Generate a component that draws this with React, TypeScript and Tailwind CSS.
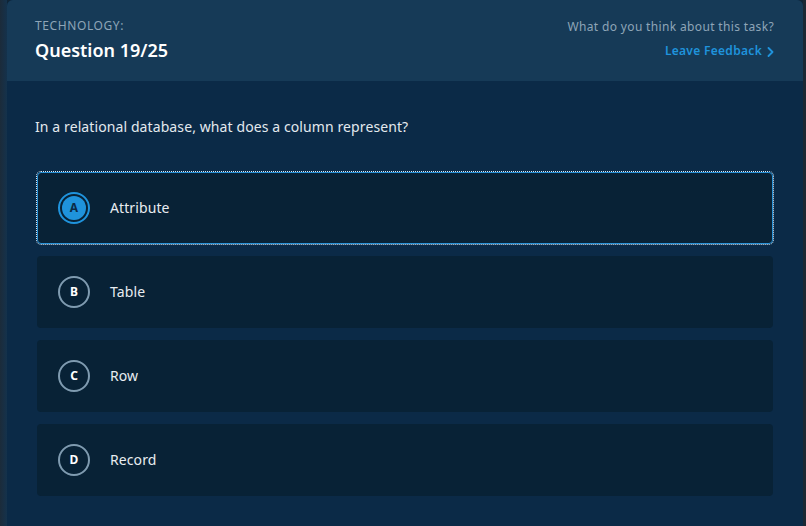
const OPTIONS = [
  { key: "A", label: "Attribute" },
  { key: "B", label: "Table" },
  { key: "C", label: "Row" },
  { key: "D", label: "Record" },
];

export default function App() {
  const selected = "A";

  return (
    <div
      className="flex h-[526px] w-[806px] bg-[#0f2436]"
      style={{ fontFamily: '"Noto Sans", "Open Sans", sans-serif' }}
    >
      <div className="w-[7px] bg-gradient-to-r from-[#1b2b3a] to-[#14324c]" />
      <div className="flex flex-1 flex-col overflow-hidden rounded-t-[6px] bg-[#0b2a47]">
        <div className="flex h-[81px] shrink-0 items-start justify-between bg-[#163a57] pl-[28px] pr-[29px] pt-[18px]">
          <div>
            <div className="text-[12px] leading-[16px] tracking-[0.05em] text-[#8ea5b7]">
              TECHNOLOGY:
            </div>
            <div className="mt-[4px] text-[18px] font-semibold leading-[24px] text-white">
              Question 19/25
            </div>
          </div>
          <div className="flex flex-col items-end pt-[1px]">
            <div className="text-[12px] leading-[16px] tracking-[0.35px] text-[#8ea5b7]">
              What do you think about this task?
            </div>
            <button className="mt-[8px] flex items-center gap-[5px] text-[12px] font-semibold leading-[16px] tracking-[0.3px] text-[#1f93dc]">
              Leave Feedback
              <svg width="7" height="10" viewBox="0 0 7 10" fill="none" className="mt-[1px]">
                <polyline
                  points="1.5,1 5.5,5 1.5,9"
                  stroke="currentColor"
                  strokeWidth="1.8"
                  strokeLinecap="round"
                  strokeLinejoin="round"
                />
              </svg>
            </button>
          </div>
        </div>

        <div className="flex flex-col px-[30px] pt-[36px]">
          <p className="-ml-[2px] text-[14px] leading-[20px] tracking-[0.1px] text-[#e3e9ee]">
            In a relational database, what does a column represent?
          </p>

          <div className="mt-[35px] flex flex-col gap-[12px]">
            {OPTIONS.map((o) => {
              const active = o.key === selected;
              return (
                <button
                  key={o.key}
                  className={`flex h-[72px] items-center rounded-[4px] bg-[#082236] pl-[20px] text-left ${
                    active
                      ? "border border-[#2a93d8] outline outline-1 outline-dotted outline-[#dbe8f2]"
                      : "border border-transparent"
                  }`}
                >
                  {active ? (
                    <span className="flex h-[32px] w-[32px] items-center justify-center rounded-full border-2 border-[#1f93dc]">
                      <span className="flex h-[24px] w-[24px] items-center justify-center rounded-full bg-[#1f93dc] text-[12px] font-bold text-[#0b2a47]">
                        {o.key}
                      </span>
                    </span>
                  ) : (
                    <span className="flex h-[32px] w-[32px] items-center justify-center rounded-full border-2 border-[#7f9bb0] text-[12px] font-bold text-white">
                      {o.key}
                    </span>
                  )}
                  <span className="ml-[20px] text-[14px] leading-[20px] tracking-[0.1px] text-[#e8edf1]">
                    {o.label}
                  </span>
                </button>
              );
            })}
          </div>
        </div>
      </div>
      <div className="w-[3px] bg-[#1b2733]" />
    </div>
  );
}
